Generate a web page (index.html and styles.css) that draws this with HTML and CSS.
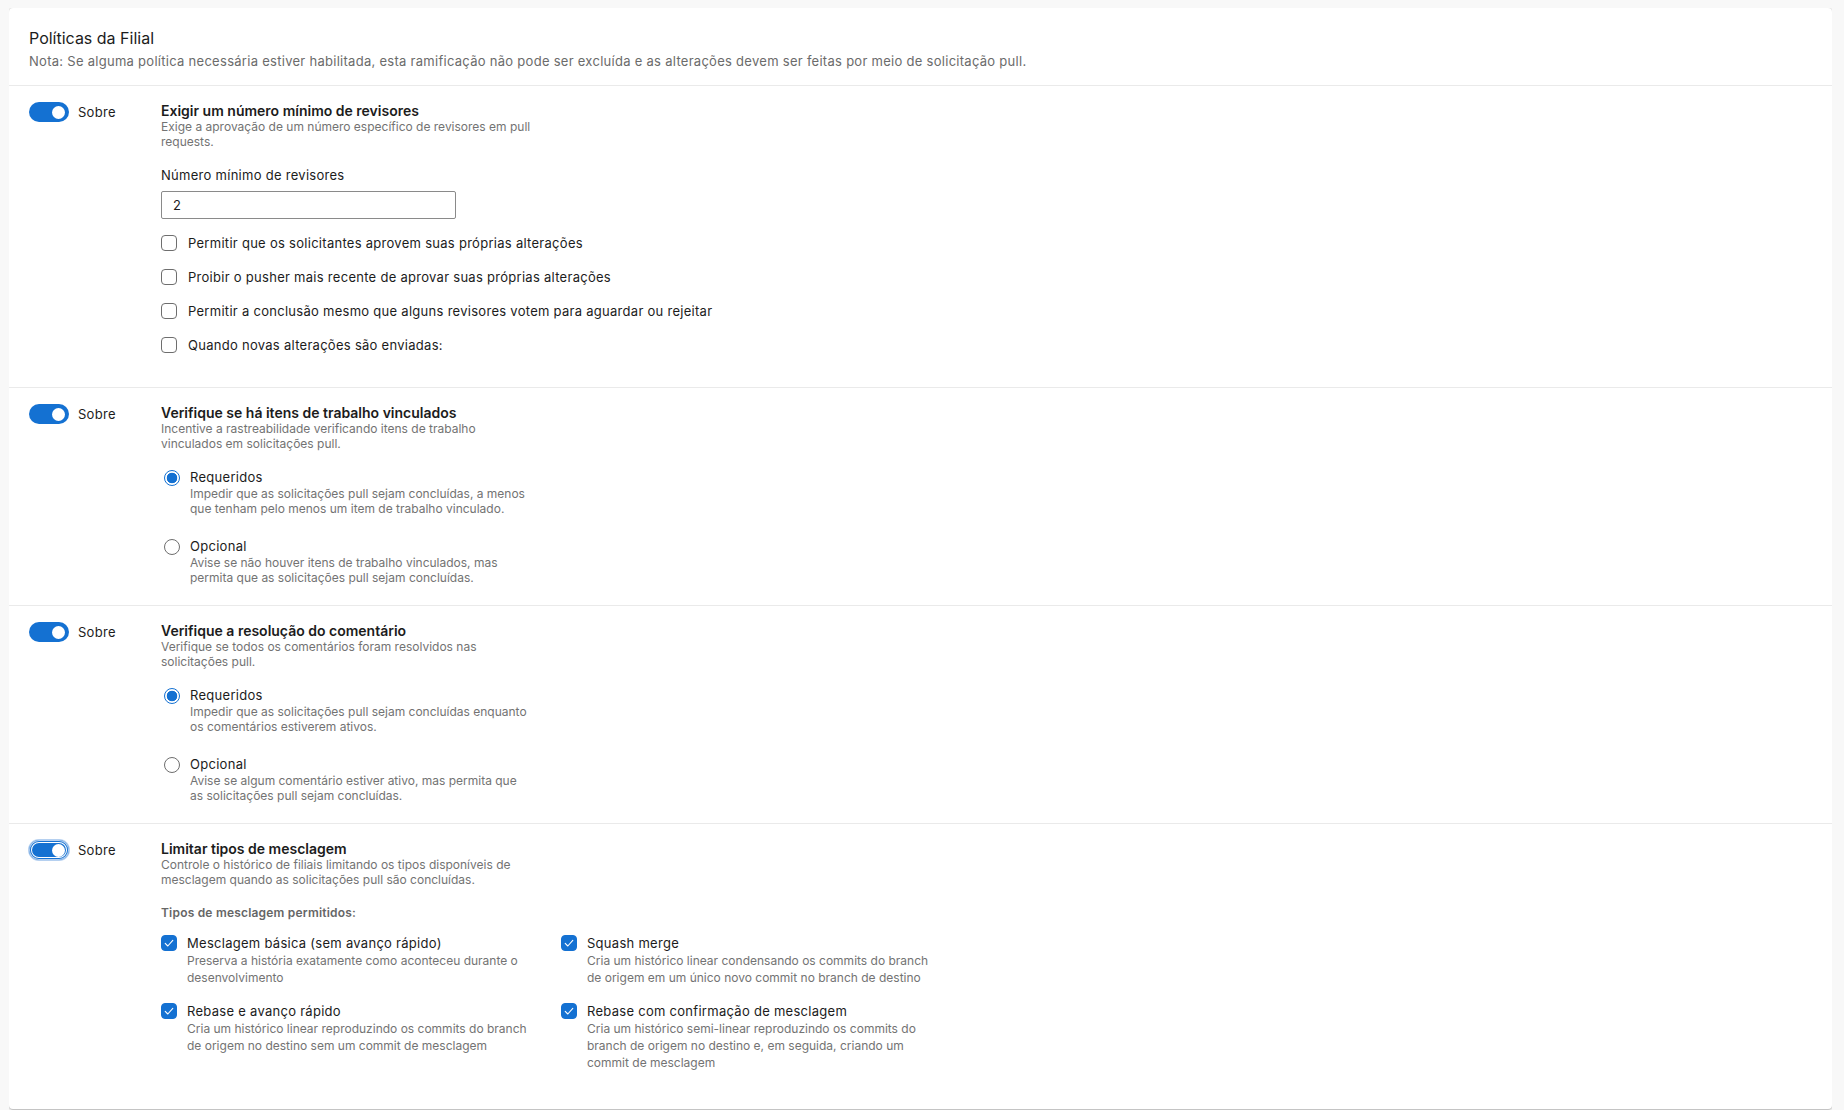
FILE: index.html
```html
<!DOCTYPE html>
<html lang="pt-BR">
<head>
<meta charset="utf-8">
<title>Políticas da Filial</title>
<link rel="stylesheet" href="styles.css">
</head>
<body>
<div class="card">
  <header class="card-header">
    <h1 class="card-title">Políticas da Filial</h1>
    <p class="card-note">Nota: Se alguma política necessária estiver habilitada, esta ramificação não pode ser excluída e as alterações devem ser feitas por meio de solicitação pull.</p>
  </header>

  <section class="policy policy-reviewers">
    <div class="policy-switch"><span class="toggle"></span><span class="toggle-label">Sobre</span></div>
    <div class="policy-body">
      <div class="policy-title">Exigir um número mínimo de revisores</div>
      <div class="policy-desc">Exige a aprovação de um número específico de revisores em pull requests.</div>
      <div class="field-label">Número mínimo de revisores</div>
      <div class="text-input">2</div>
      <div class="check-list">
        <div class="check-row"><span class="checkbox"></span><span class="check-text">Permitir que os solicitantes aprovem suas próprias alterações</span></div>
        <div class="check-row"><span class="checkbox"></span><span class="check-text">Proibir o pusher mais recente de aprovar suas próprias alterações</span></div>
        <div class="check-row"><span class="checkbox"></span><span class="check-text">Permitir a conclusão mesmo que alguns revisores votem para aguardar ou rejeitar</span></div>
        <div class="check-row"><span class="checkbox"></span><span class="check-text">Quando novas alterações são enviadas:</span></div>
      </div>
    </div>
  </section>

  <section class="policy">
    <div class="policy-switch"><span class="toggle"></span><span class="toggle-label">Sobre</span></div>
    <div class="policy-body">
      <div class="policy-title">Verifique se há itens de trabalho vinculados</div>
      <div class="policy-desc">Incentive a rastreabilidade verificando itens de trabalho vinculados em solicitações pull.</div>
      <div class="radio-group">
        <div class="radio-option">
          <span class="radio selected"></span>
          <div class="radio-text">
            <div class="radio-label">Requeridos</div>
            <div class="radio-desc">Impedir que as solicitações pull sejam concluídas, a menos que tenham pelo menos um item de trabalho vinculado.</div>
          </div>
        </div>
        <div class="radio-option">
          <span class="radio"></span>
          <div class="radio-text">
            <div class="radio-label">Opcional</div>
            <div class="radio-desc">Avise se não houver itens de trabalho vinculados, mas permita que as solicitações pull sejam concluídas.</div>
          </div>
        </div>
      </div>
    </div>
  </section>

  <section class="policy">
    <div class="policy-switch"><span class="toggle"></span><span class="toggle-label">Sobre</span></div>
    <div class="policy-body">
      <div class="policy-title">Verifique a resolução do comentário</div>
      <div class="policy-desc">Verifique se todos os comentários foram resolvidos nas solicitações pull.</div>
      <div class="radio-group">
        <div class="radio-option">
          <span class="radio selected"></span>
          <div class="radio-text">
            <div class="radio-label">Requeridos</div>
            <div class="radio-desc">Impedir que as solicitações pull sejam concluídas enquanto os comentários estiverem ativos.</div>
          </div>
        </div>
        <div class="radio-option">
          <span class="radio"></span>
          <div class="radio-text">
            <div class="radio-label">Opcional</div>
            <div class="radio-desc">Avise se algum comentário estiver ativo, mas permita que as solicitações pull sejam concluídas.</div>
          </div>
        </div>
      </div>
    </div>
  </section>

  <section class="policy">
    <div class="policy-switch"><span class="toggle focused"></span><span class="toggle-label">Sobre</span></div>
    <div class="policy-body">
      <div class="policy-title">Limitar tipos de mesclagem</div>
      <div class="policy-desc">Controle o histórico de filiais limitando os tipos disponíveis de mesclagem quando as solicitações pull são concluídas.</div>
      <div class="merge-heading">Tipos de mesclagem permitidos:</div>
      <div class="merge-grid">
        <div class="merge-option">
          <span class="checkbox checked"><svg viewBox="0 0 16 16" width="16" height="16"><path d="M4.2 8.4l2.6 2.6 5-5.6" fill="none" stroke="#fff" stroke-width="1.1" stroke-linecap="round" stroke-linejoin="round"/></svg></span>
          <div class="merge-text">
            <div class="merge-label">Mesclagem básica (sem avanço rápido)</div>
            <div class="merge-desc">Preserva a história exatamente como aconteceu durante o desenvolvimento</div>
          </div>
        </div>
        <div class="merge-option">
          <span class="checkbox checked"><svg viewBox="0 0 16 16" width="16" height="16"><path d="M4.2 8.4l2.6 2.6 5-5.6" fill="none" stroke="#fff" stroke-width="1.1" stroke-linecap="round" stroke-linejoin="round"/></svg></span>
          <div class="merge-text">
            <div class="merge-label">Squash merge</div>
            <div class="merge-desc">Cria um histórico linear condensando os commits do branch de origem em um único novo commit no branch de destino</div>
          </div>
        </div>
        <div class="merge-option">
          <span class="checkbox checked"><svg viewBox="0 0 16 16" width="16" height="16"><path d="M4.2 8.4l2.6 2.6 5-5.6" fill="none" stroke="#fff" stroke-width="1.1" stroke-linecap="round" stroke-linejoin="round"/></svg></span>
          <div class="merge-text">
            <div class="merge-label">Rebase e avanço rápido</div>
            <div class="merge-desc">Cria um histórico linear reproduzindo os commits do branch de origem no destino sem um commit de mesclagem</div>
          </div>
        </div>
        <div class="merge-option">
          <span class="checkbox checked"><svg viewBox="0 0 16 16" width="16" height="16"><path d="M4.2 8.4l2.6 2.6 5-5.6" fill="none" stroke="#fff" stroke-width="1.1" stroke-linecap="round" stroke-linejoin="round"/></svg></span>
          <div class="merge-text">
            <div class="merge-label">Rebase com confirmação de mesclagem</div>
            <div class="merge-desc">Cria um histórico semi-linear reproduzindo os commits do branch de origem no destino e, em seguida, criando um commit de mesclagem</div>
          </div>
        </div>
      </div>
    </div>
  </section>
</div>
</body>
</html>
```

FILE: styles.css
```css
html, body {
  height: 100%;
}
body {
  margin: 8px 12px 0 9px;
  background: #f8f8f8;
  font-family: "Inter", "Noto Sans", "Liberation Sans", sans-serif;
  color: #1c1c1c;
  overflow: hidden;
}

.card {
  background: #fff;
  border-radius: 4px;
  box-shadow: 0 0 0 1px rgba(0, 0, 0, 0.03), 0 1.6px 3.6px rgba(0, 0, 0, 0.12), 0 0.3px 0.9px rgba(0, 0, 0, 0.1);
  padding-bottom: 18px;
}

.card-header {
  padding: 18px 20px 15px;
  border-bottom: 1px solid #eaeaea;
}
.card-title {
  margin: 0;
  font-size: 16px;
  line-height: 24px;
  font-weight: 400;
  color: #1c1c1c;
}
.card-note {
  margin: 2px 0 0;
  font-size: 13px;
  line-height: 18px;
  letter-spacing: 0.28px;
  color: #6b6b6b;
}

.policy {
  display: flex;
  padding: 16px 20px 20px;
  border-top: 1px solid #eaeaea;
}
.card-header + .policy {
  border-top: none;
}
.policy-reviewers {
  padding-bottom: 32px;
}

.policy-switch {
  width: 132px;
  flex: none;
  display: flex;
  align-items: flex-start;
  gap: 9px;
}
.toggle {
  position: relative;
  width: 40px;
  height: 20px;
  border-radius: 10px;
  background: #1471d2;
  flex: none;
}
.toggle::after {
  content: "";
  position: absolute;
  right: 4px;
  top: 3.5px;
  width: 13px;
  height: 13px;
  border-radius: 50%;
  background: #fff;
}
.toggle.focused {
  box-shadow: 0 0 0 1px #b5d0f0, inset 0 0 0 1px #b5d0f0, inset 0 0 0 2px #1471d2, inset 0 0 0 3px #fff;
}
.toggle-label {
  font-size: 13px;
  line-height: 20px;
  letter-spacing: 0.28px;
  color: #1c1c1c;
}

.policy-body {
  flex: 1;
  min-width: 0;
}
.policy-title {
  font-size: 14px;
  line-height: 18px;
  font-weight: 600;
  color: #1c1c1c;
}
.policy-desc {
  margin-top: -1px;
  max-width: 370px;
  font-size: 12px;
  line-height: 15px;
  color: #737373;
}

.field-label {
  margin-top: 17px;
  font-size: 13px;
  line-height: 18px;
  letter-spacing: 0.28px;
  color: #1c1c1c;
}
.text-input {
  margin-top: 7px;
  box-sizing: border-box;
  width: 295px;
  height: 28px;
  border: 1px solid #8a8a8a;
  border-radius: 2px;
  padding: 0 11px;
  font-size: 13px;
  line-height: 26px;
  color: #1c1c1c;
}

.check-list {
  display: flex;
  flex-direction: column;
  gap: 14px;
  margin-top: 14px;
}
.check-row {
  display: flex;
  align-items: center;
  gap: 11px;
  height: 20px;
}
.checkbox {
  box-sizing: border-box;
  width: 16px;
  height: 16px;
  flex: none;
  border: 1px solid #6e6e6e;
  border-radius: 4px;
  background: #fff;
}
.checkbox.checked {
  border-color: #1471d2;
  background: #1471d2;
  display: flex;
  align-items: center;
  justify-content: center;
}
.checkbox.checked svg {
  display: block;
  flex: none;
}
.check-text {
  font-size: 13px;
  line-height: 18px;
  letter-spacing: 0.28px;
  color: #1c1c1c;
}

.radio-group {
  margin-top: 17px;
  display: flex;
  flex-direction: column;
  gap: 21px;
}
.radio-option {
  display: flex;
  align-items: flex-start;
}
.radio {
  box-sizing: border-box;
  width: 16px;
  height: 16px;
  flex: none;
  margin: 2px 10px 0 3px;
  border: 1px solid #6e6e6e;
  border-radius: 50%;
  background: #fff;
}
.radio.selected {
  border: 1.5px solid #1471d2;
  background: radial-gradient(circle, #1471d2 0 5px, #fff 5.6px);
}
.radio-text {
  max-width: 342px;
}
.radio-label {
  font-size: 13px;
  line-height: 18px;
  letter-spacing: 0.28px;
  color: #1c1c1c;
}
.radio-desc {
  font-size: 12px;
  line-height: 15px;
  color: #737373;
}

.merge-heading {
  margin-top: 18px;
  font-size: 12px;
  line-height: 16px;
  font-weight: 600;
  letter-spacing: 0.2px;
  color: #666;
}
.merge-grid {
  margin-top: 13px;
  display: grid;
  grid-template-columns: 372px 372px;
  column-gap: 28px;
  row-gap: 16px;
}
.merge-option {
  display: flex;
  align-items: flex-start;
  gap: 10px;
}
.merge-option .checkbox {
  margin-top: 1px;
}
.merge-label {
  font-size: 13px;
  line-height: 18px;
  letter-spacing: 0.28px;
  color: #1c1c1c;
}
.merge-desc {
  font-size: 12px;
  line-height: 17px;
  color: #737373;
}
```
